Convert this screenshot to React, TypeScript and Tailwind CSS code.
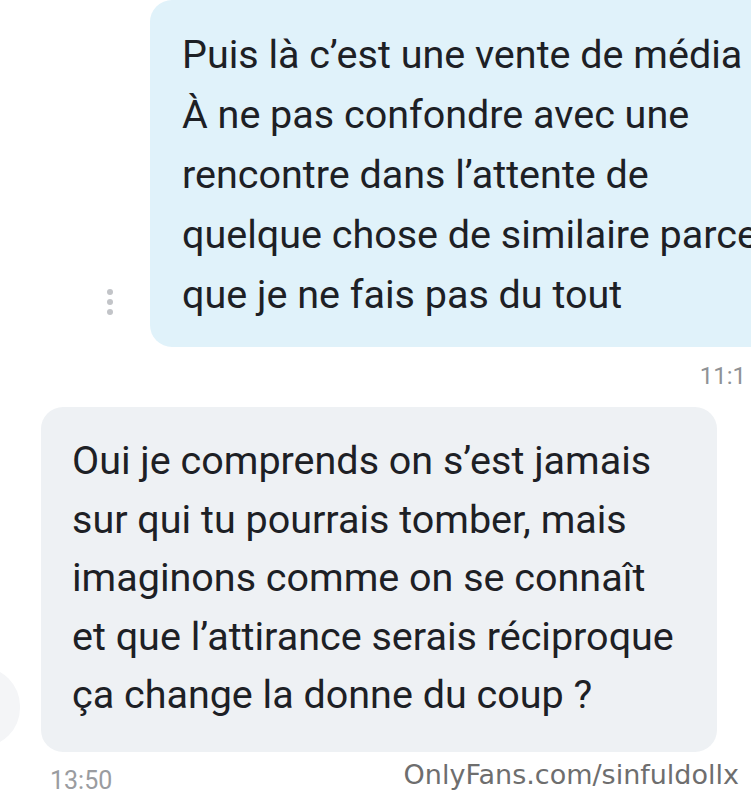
import React from "react";

const SENT = [
  "Puis là c’est une vente de média",
  "À ne pas confondre avec une",
  "rencontre dans l’attente de",
  "quelque chose de similaire parce",
  "que je ne fais pas du tout",
];

const RECEIVED = [
  "Oui je comprends on s’est jamais",
  "sur qui tu pourrais tomber, mais",
  "imaginons comme on se connaît",
  "et que l’attirance serais réciproque",
  "ça change la donne du coup ?",
];

export default function App() {
  return (
    <div
      className="relative w-[751px] h-[800px] overflow-hidden bg-white text-[#1d2025]"
      style={{ fontFamily: "Roboto, 'Noto Sans', sans-serif" }}
    >
      {/* sent message */}
      <div className="flex items-end">
        <div className="w-[150px] shrink-0 flex justify-end pr-[37px] pb-[32px]">
          <div className="flex flex-col gap-[4px]">
            <span className="w-[6px] h-[6px] rounded-full bg-[#c2c4c8]" />
            <span className="w-[6px] h-[6px] rounded-full bg-[#c2c4c8]" />
            <span className="w-[6px] h-[6px] rounded-full bg-[#c2c4c8]" />
          </div>
        </div>
        <div className="w-[640px] shrink-0 rounded-[22px] bg-[#e0f2fa] pl-[32px] pt-[25px] pb-[22px] text-[39.5px] leading-[60px] whitespace-nowrap">
          {SENT.map((line) => (
            <div key={line}>{line}</div>
          ))}
        </div>
      </div>

      <div className="flex justify-end pr-[5px] pt-[14px] h-[60px] text-[24px] leading-[30px] text-[#8f9296]">
        11:1
      </div>

      {/* received message */}
      <div className="relative flex">
        <div className="absolute left-[-58px] top-[260px] w-[78px] h-[80px] rounded-full bg-[#f4f5f7]" />
        <div className="ml-[41px] w-[676px] h-[345px] rounded-[22px] bg-[#eef1f4] pl-[31px] pt-[25px] text-[39.5px] leading-[58.5px] whitespace-nowrap">
          {RECEIVED.map((line) => (
            <div key={line}>{line}</div>
          ))}
        </div>
      </div>

      <div className="flex items-start justify-between pt-[14px]">
        <span className="pl-[50px] text-[25px] leading-[30px] text-[#9a9ca0]">13:50</span>
        <span
          className="pr-[12px] mt-[-6px] text-[27px] leading-[30px] text-[#6e6e6e]"
          style={{ fontFamily: "'DejaVu Sans', sans-serif" }}
        >
          OnlyFans.com/sinfuldollx
        </span>
      </div>
    </div>
  );
}
